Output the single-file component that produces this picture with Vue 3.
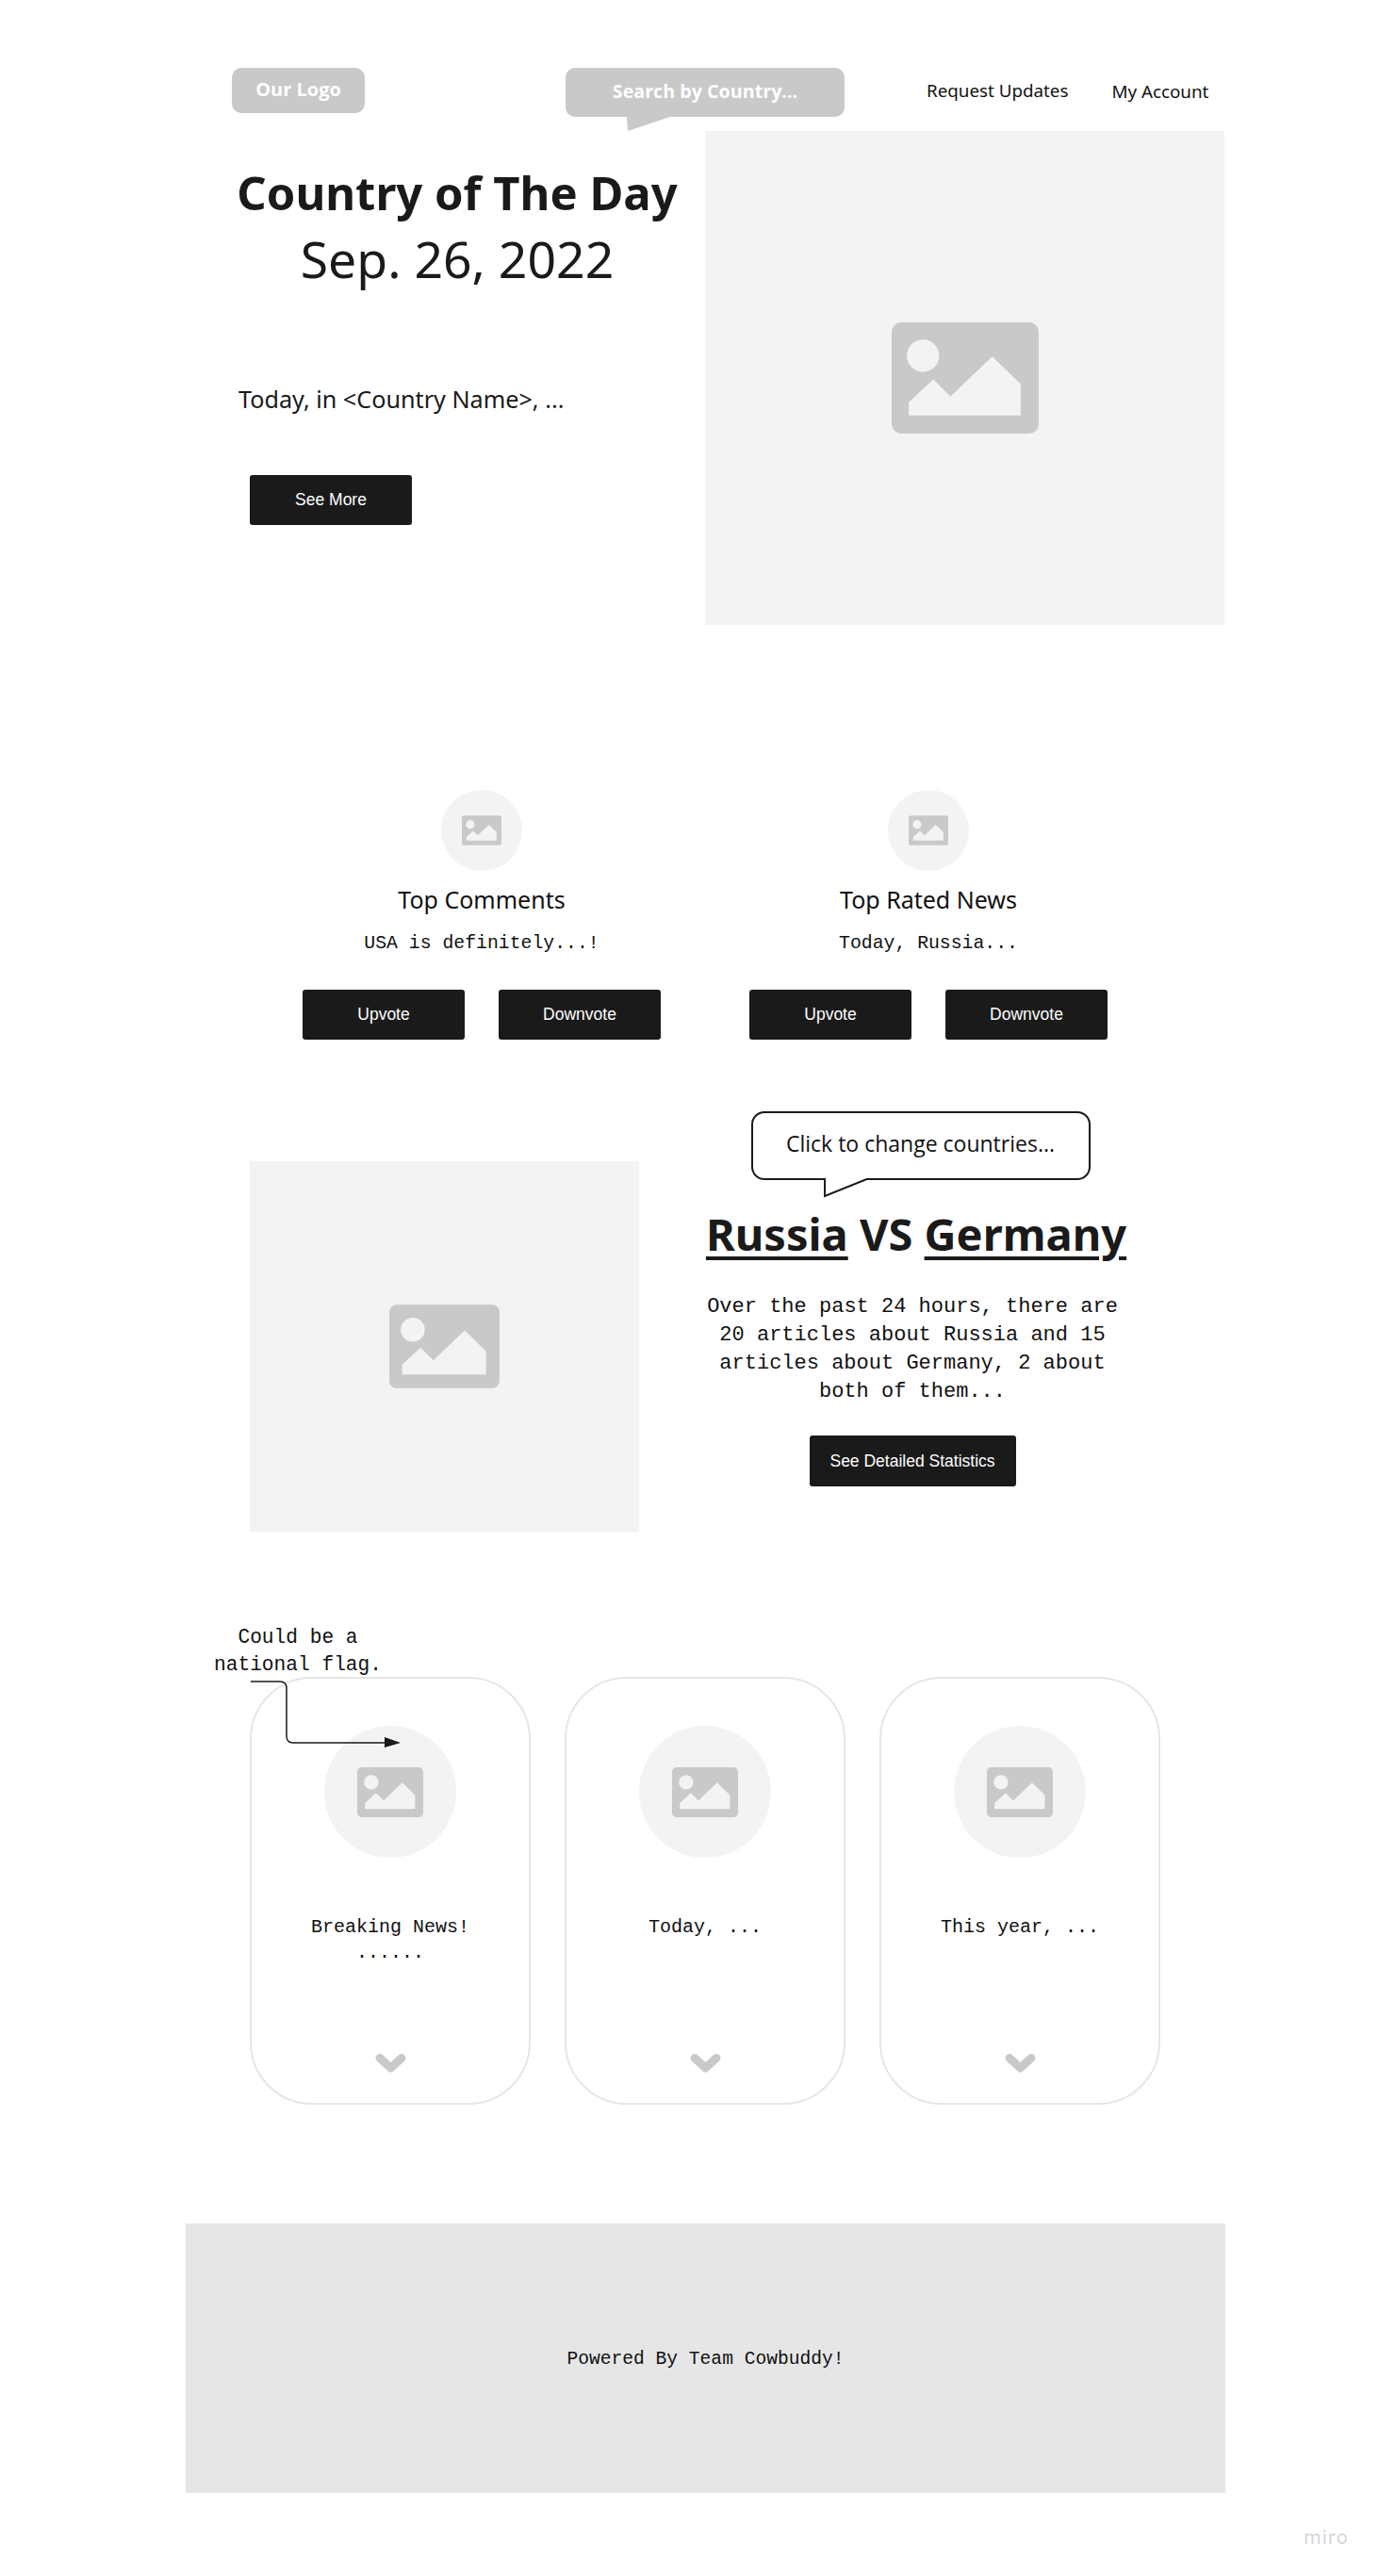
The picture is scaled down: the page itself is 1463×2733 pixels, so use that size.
<script setup>
const stats = [
  { title: 'Top Comments', text: 'USA is definitely...!' },
  { title: 'Top Rated News', text: 'Today, Russia...' },
]

const cards = [
  { lines: ['Breaking News!', '......'] },
  { lines: ['Today, ...'] },
  { lines: ['This year, ...'] },
]

const iconPath =
  'M10 0H145A10 10 0 0 1 155 10V107A10 10 0 0 1 145 117H10A10 10 0 0 1 0 107V10A10 10 0 0 1 10 0Z' +
  'M33 18A17 17 0 1 0 33 52A17 17 0 1 0 33 18Z' +
  'M18 84L44 60L62 78L106 36L136 65V98H18Z'
</script>

<template>
  <div class="page">
    <header class="topbar">
      <div class="logo">Our Logo</div>
      <div class="search">
        Search by Country...
        <svg class="search-tail" width="46" height="16" viewBox="0 0 46 16">
          <path d="M0 0H46L1 15Z" fill="#c9c9c9" />
        </svg>
      </div>
      <nav class="nav">
        <a class="nav-link">Request Updates</a>
        <a class="nav-link">My Account</a>
      </nav>
    </header>

    <section class="hero">
      <div class="hero-left">
        <h1 class="hero-title">Country of The Day</h1>
        <p class="hero-date">Sep. 26, 2022</p>
        <p class="hero-text">Today, in &lt;Country Name&gt;, ...</p>
        <button class="btn btn-more">See More</button>
      </div>
      <div class="placeholder hero-img">
        <svg class="icon icon-hero" viewBox="0 0 155 117"><path :d="iconPath" fill-rule="evenodd" /></svg>
      </div>
    </section>

    <section class="stats">
      <div v-for="item in stats" :key="item.title" class="stat">
        <div class="avatar">
          <svg class="icon icon-small" viewBox="0 0 155 117"><path :d="iconPath" fill-rule="evenodd" /></svg>
        </div>
        <h3 class="stat-title">{{ item.title }}</h3>
        <p class="stat-text">{{ item.text }}</p>
        <div class="stat-actions">
          <button class="btn">Upvote</button>
          <button class="btn">Downvote</button>
        </div>
      </div>
    </section>

    <section class="compare">
      <div class="placeholder compare-img">
        <svg class="icon icon-compare" viewBox="0 0 155 117"><path :d="iconPath" fill-rule="evenodd" /></svg>
      </div>
      <div class="compare-right">
        <div class="callout">
          Click to change countries...
          <svg class="callout-tail" width="56" height="22" viewBox="0 0 56 22">
            <path d="M1 0V19L48 0" fill="#fff" stroke="#1a1a1a" stroke-width="2" />
          </svg>
        </div>
        <h2 class="compare-title"><u>Russia</u> VS <u>Germany</u></h2>
        <p class="compare-text">
          Over the past 24 hours, there are<br />
          20 articles about Russia and 15<br />
          articles about Germany, 2 about<br />
          both of them...
        </p>
        <button class="btn btn-stats">See Detailed Statistics</button>
      </div>
    </section>

    <section class="cards">
      <div class="note">Could be a<br />national flag.</div>
      <svg class="note-arrow" width="170" height="75" viewBox="0 0 170 75">
        <path d="M2 1H33Q40 1 40 8V59Q40 66 47 66H150" fill="none" stroke="#1a1a1a" stroke-width="1.5" />
        <path d="M144 60L161 66L144 71Z" fill="#1a1a1a" />
      </svg>
      <article v-for="(card, i) in cards" :key="i" class="card">
        <div class="card-circle">
          <svg class="icon icon-card" viewBox="0 0 155 117"><path :d="iconPath" fill-rule="evenodd" /></svg>
        </div>
        <p class="card-text">
          <span v-for="line in card.lines" :key="line" class="card-line">{{ line }}</span>
        </p>
        <svg class="chevron" width="33" height="22" viewBox="0 0 33 22">
          <path d="M5 5.5L16.5 16L28 5.5" fill="none" stroke="#c9c9c9" stroke-width="9" stroke-linejoin="round" stroke-linecap="round" />
        </svg>
      </article>
    </section>

    <footer class="footer">Powered By Team Cowbuddy!</footer>
    <div class="miro">miro</div>
  </div>
</template>

<style scoped>
.page {
  position: relative;
  width: 1463px;
  height: 2733px;
  overflow: hidden;
  background: #fff;
  color: #1a1a1a;
  font-family: 'Noto Sans', sans-serif;
}
h1,
h2,
h3,
p {
  margin: 0;
  font-weight: 400;
}
.topbar {
  display: flex;
  align-items: flex-start;
  height: 67px;
  padding: 72px 0 0 246px;
}
.logo {
  width: 141px;
  height: 48px;
  border-radius: 10px;
  background: #c9c9c9;
  color: #fff;
  font: 700 20px/45px 'Open Sans', sans-serif;
  text-align: center;
}
.search {
  position: relative;
  width: 296px;
  height: 52px;
  margin-left: 213px;
  border-radius: 10px;
  background: #c9c9c9;
  color: #fff;
  font: 700 19.7px/50px 'Open Sans', sans-serif;
  text-align: center;
}
.search-tail {
  position: absolute;
  left: 65px;
  top: 52px;
}
.nav {
  display: flex;
  gap: 46px;
  margin-left: 87px;
  padding-top: 12px;
  font-size: 18.8px;
  line-height: 24px;
  color: #111;
}
.nav-link:last-child {
  padding-top: 1px;
}
.hero {
  display: flex;
  padding-left: 246px;
}
.hero-left {
  width: 502px;
}
.hero-title {
  width: 478px;
  margin-top: 34px;
  font-size: 49px;
  line-height: 62px;
  font-weight: 700;
  text-align: center;
  white-space: nowrap;
}
.hero-date {
  width: 478px;
  margin-top: 8px;
  font-size: 53.5px;
  line-height: 64px;
  text-align: center;
}
.hero-text {
  margin: 99px 0 0 7px;
  font-size: 25.2px;
  line-height: 34px;
}
.placeholder {
  display: flex;
  align-items: center;
  justify-content: center;
  background: #f3f3f3;
}
.hero-img {
  width: 551px;
  height: 524px;
}
.icon {
  fill: #c9c9c9;
  flex: none;
}
.icon-hero {
  width: 156px;
  height: 118px;
  margin-bottom: 1px;
}
.icon-small {
  width: 42px;
  height: 32px;
}
.icon-compare {
  width: 117px;
  height: 89px;
}
.icon-card {
  width: 70px;
  height: 53px;
}
.btn {
  display: block;
  width: 172px;
  height: 53px;
  padding: 0;
  border: 0;
  border-radius: 3px;
  background: #1a1a1a;
  color: #fff;
  font: 400 17.5px 'Liberation Sans', Arial, sans-serif;
}
.btn-more {
  margin: 64px 0 0 19px;
}
.stats {
  display: flex;
  gap: 94px;
  margin-top: 175px;
  padding-left: 321px;
}
.stat {
  display: flex;
  flex-direction: column;
  align-items: center;
  width: 380px;
}
.avatar {
  display: flex;
  align-items: center;
  justify-content: center;
  width: 86px;
  height: 86px;
  border-radius: 50%;
  background: #f3f3f3;
}
.stat-title {
  margin-top: 12px;
  font-size: 25px;
  line-height: 36px;
  color: #111;
}
.stat-text {
  margin-top: 15px;
  font: 400 19.8px/28px 'Liberation Mono', monospace;
  color: #111;
}
.stat-actions {
  display: flex;
  gap: 36px;
  margin-top: 35px;
}
.compare {
  display: flex;
  align-items: flex-start;
  margin-top: 76px;
  padding-left: 265px;
}
.compare-img {
  width: 413px;
  height: 393px;
  margin-top: 53px;
}
.compare-right {
  display: flex;
  flex-direction: column;
  align-items: center;
  width: 580px;
}
.callout {
  position: relative;
  box-sizing: border-box;
  width: 360px;
  height: 73px;
  margin-left: 17px;
  border: 2px solid #1a1a1a;
  border-radius: 14px;
  background: #fff;
  font: 400 23px/65px 'Open Sans', sans-serif;
  text-align: center;
  color: #111;
}
.callout-tail {
  position: absolute;
  left: 75px;
  top: 69px;
}
.compare-title {
  margin: 24px 0 0 8px;
  font-size: 47px;
  line-height: 66px;
  font-weight: 700;
  white-space: nowrap;
}
.compare-title u {
  text-decoration-thickness: 4px;
  text-underline-offset: 6px;
}
.compare-text {
  margin-top: 30px;
  font: 400 22px/30px 'Liberation Mono', monospace;
  text-align: center;
  color: #111;
}
.btn-stats {
  width: 219px;
  height: 54px;
  margin-top: 31px;
}
.cards {
  position: relative;
  display: flex;
  gap: 36px;
  margin-top: 154px;
  padding-left: 265px;
}
.note {
  position: absolute;
  left: 227px;
  top: -56px;
  font: 400 21.2px/29px 'Liberation Mono', monospace;
  text-align: center;
  color: #111;
}
.note-arrow {
  position: absolute;
  left: 264px;
  top: 4px;
}
.card {
  box-sizing: border-box;
  display: flex;
  flex-direction: column;
  align-items: center;
  width: 298px;
  height: 454px;
  padding-top: 50px;
  border: 2.5px solid #e6e6e6;
  border-radius: 66px;
}
.card-circle {
  display: flex;
  align-items: center;
  justify-content: center;
  width: 140px;
  height: 140px;
  border-radius: 50%;
  background: #f3f3f3;
}
.card-text {
  height: 76px;
  margin-top: 60px;
  font: 400 20px/27px 'Liberation Mono', monospace;
  text-align: center;
  color: #111;
}
.card-line {
  display: block;
}
.chevron {
  margin-top: 71px;
}
.footer {
  width: 1103px;
  height: 286px;
  margin: 126px 0 0 197px;
  background: #e6e6e6;
  font: 400 19.6px/288px 'Liberation Mono', monospace;
  text-align: center;
  color: #111;
}
.miro {
  position: absolute;
  left: 1383px;
  top: 2679px;
  font: 400 20px/26px 'Noto Sans', sans-serif;
  letter-spacing: 1px;
  color: #d4d4da;
}
</style>
